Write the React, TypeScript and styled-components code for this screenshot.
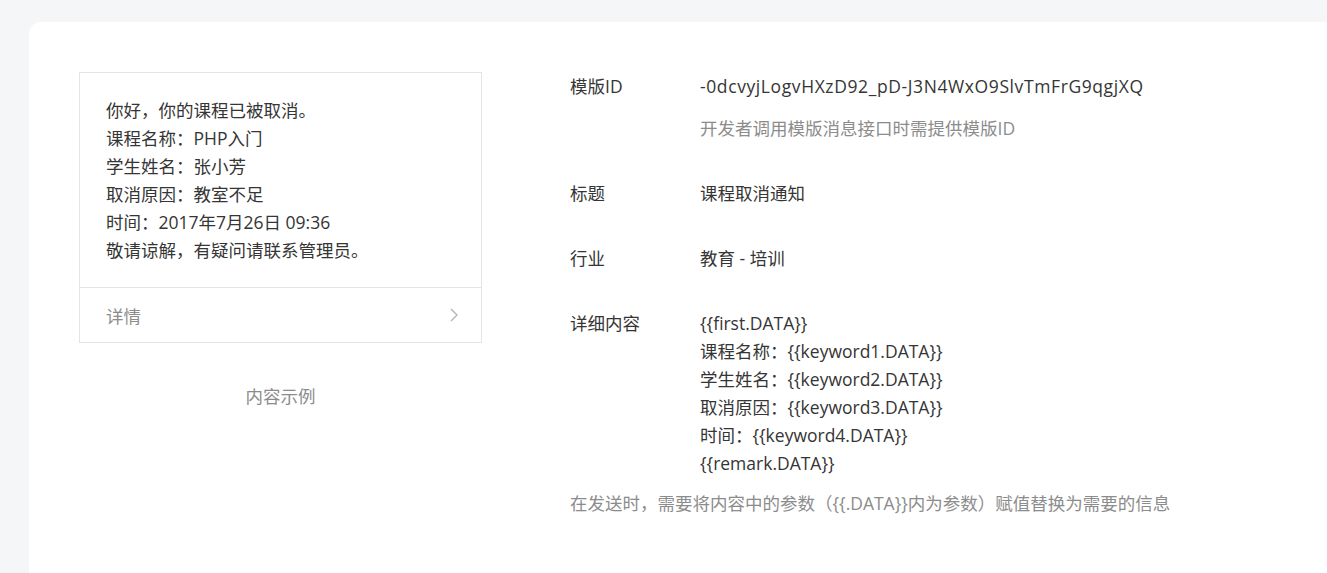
import React from "react";
import styled, { createGlobalStyle } from "styled-components";

const Global = createGlobalStyle`
  html, body { margin: 0; padding: 0; background: #f5f6f7; }
  body { font-family: "Open Sans", "Noto Sans CJK SC", sans-serif; color: #353535; }
  * { box-sizing: border-box; }
`;

const Page = styled.div`
  padding: 22px 0 0 29px;
  min-height: 573px;
`;

const Card = styled.div`
  background: #fff;
  border-top-left-radius: 12px;
  min-height: 551px;
  padding: 50px 0 0 50px;
  display: flex;
  gap: 88px;
`;

const PreviewCol = styled.div`
  width: 403px;
  flex: none;
  display: flex;
  flex-direction: column;
  align-items: center;
`;

const Preview = styled.div`
  width: 100%;
  border: 1px solid #e4e4e4;
  background: #fff;
`;

const PreviewBody = styled.div`
  padding: 23px 26px 23px;
  font-size: 17.5px;
  line-height: 28px;
  color: #353535;
`;

const Line = styled.div``;

const PreviewFooter = styled.div`
  border-top: 1px solid #e4e4e4;
  height: 55px;
  padding: 0 22px 0 26px;
  display: flex;
  align-items: center;
  justify-content: space-between;
  font-size: 17.5px;
  color: #8c8c8c;
`;

const Caption = styled.div`
  margin-top: 39px;
  font-size: 17.5px;
  line-height: 28px;
  color: #8c8c8c;
`;

const Info = styled.div`
  display: flex;
  flex-direction: column;
  gap: 37px;
  font-size: 17.5px;
  line-height: 28px;
`;

const Row = styled.div`
  display: flex;
`;

const Label = styled.div`
  width: 130px;
  flex: none;
  color: #353535;
`;

const Value = styled.div<{ $code?: boolean }>`
  color: #353535;
  letter-spacing: ${(p) => (p.$code ? "0.6px" : "0")};
`;

const Hint = styled.div`
  margin-top: 14px;
  color: #8c8c8c;
`;

const Note = styled.div`
  margin-top: -25px;
  color: #8c8c8c;
`;

const Chevron = () => (
  <svg width="10" height="16" viewBox="0 0 10 16" fill="none">
    <path d="M2 2l6 6-6 6" stroke="#b2b2b2" strokeWidth="1.3" />
  </svg>
);

const previewLines = [
  "你好，你的课程已被取消。",
  "课程名称：PHP入门",
  "学生姓名：张小芳",
  "取消原因：教室不足",
  "时间：2017年7月26日 09:36",
  "敬请谅解，有疑问请联系管理员。",
];

const detailLines = [
  "{{first.DATA}}",
  "课程名称：{{keyword1.DATA}}",
  "学生姓名：{{keyword2.DATA}}",
  "取消原因：{{keyword3.DATA}}",
  "时间：{{keyword4.DATA}}",
  "{{remark.DATA}}",
];

export default function App() {
  return (
    <>
      <Global />
      <Page>
        <Card>
          <PreviewCol>
            <Preview>
              <PreviewBody>
                {previewLines.map((l) => (
                  <Line key={l}>{l}</Line>
                ))}
              </PreviewBody>
              <PreviewFooter>
                <span>详情</span>
                <Chevron />
              </PreviewFooter>
            </Preview>
            <Caption>内容示例</Caption>
          </PreviewCol>
          <Info>
            <Row>
              <Label>模版ID</Label>
              <div>
                <Value $code>-0dcvyjLogvHXzD92_pD-J3N4WxO9SlvTmFrG9qgjXQ</Value>
                <Hint>开发者调用模版消息接口时需提供模版ID</Hint>
              </div>
            </Row>
            <Row>
              <Label>标题</Label>
              <Value>课程取消通知</Value>
            </Row>
            <Row>
              <Label>行业</Label>
              <Value>教育 - 培训</Value>
            </Row>
            <Row>
              <Label>详细内容</Label>
              <Value>
                {detailLines.map((l) => (
                  <Line key={l}>{l}</Line>
                ))}
              </Value>
            </Row>
            <Note>在发送时，需要将内容中的参数（{"{{.DATA}}"}内为参数）赋值替换为需要的信息</Note>
          </Info>
        </Card>
      </Page>
    </>
  );
}
